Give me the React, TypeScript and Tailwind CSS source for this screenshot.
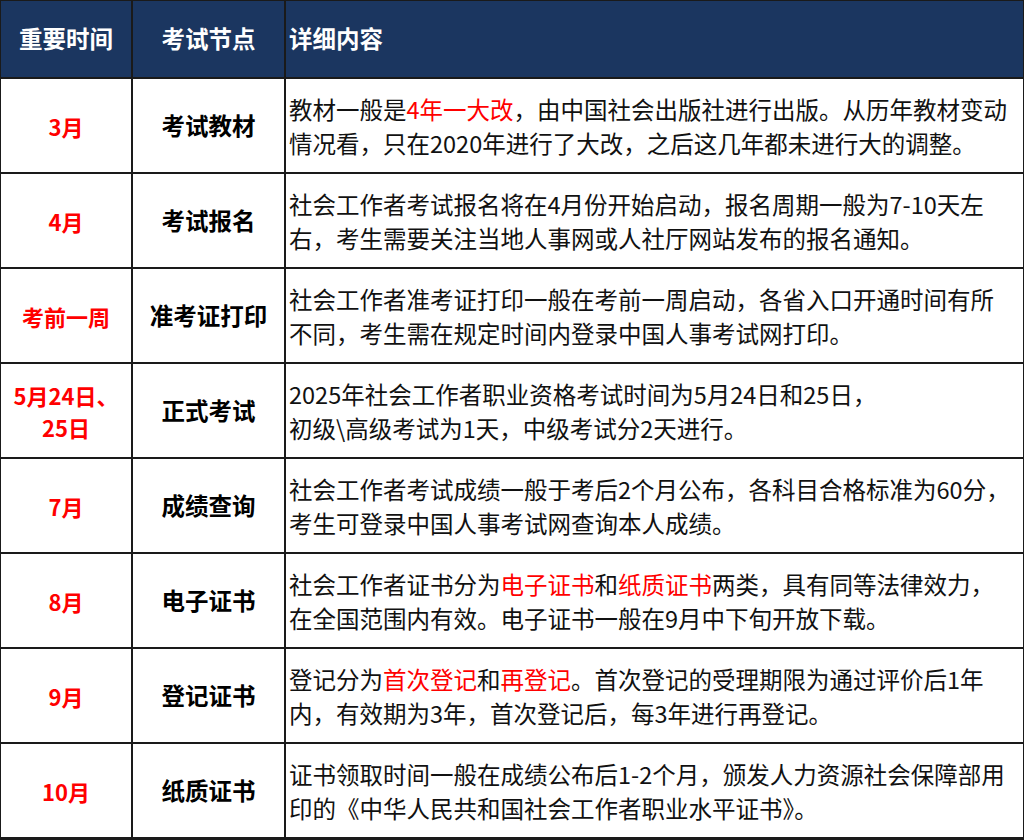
import React from "react";

const R = ({ children }: { children: React.ReactNode }) => <span className="text-[#ff0000]">{children}</span>;

const rows: [React.ReactNode, string, React.ReactNode, React.ReactNode][] = [
  ["3月", "考试教材", <>教材一般是<R>4年一大改</R>，由中国社会出版社进行出版。从历年教材变动</>, "情况看，只在2020年进行了大改，之后这几年都未进行大的调整。"],
  ["4月", "考试报名", "社会工作者考试报名将在4月份开始启动，报名周期一般为7-10天左", "右，考生需要关注当地人事网或人社厅网站发布的报名通知。"],
  ["考前一周", "准考证打印", "社会工作者准考证打印一般在考前一周启动，各省入口开通时间有所", "不同，考生需在规定时间内登录中国人事考试网打印。"],
  [<>5月24日、<br />25日</>, "正式考试", "2025年社会工作者职业资格考试时间为5月24日和25日，", "初级\\高级考试为1天，中级考试分2天进行。"],
  ["7月", "成绩查询", "社会工作者考试成绩一般于考后2个月公布，各科目合格标准为60分，", "考生可登录中国人事考试网查询本人成绩。"],
  ["8月", "电子证书", <>社会工作者证书分为<R>电子证书</R>和<R>纸质证书</R>两类，具有同等法律效力，</>, "在全国范围内有效。电子证书一般在9月中下旬开放下载。"],
  ["9月", "登记证书", <>登记分为<R>首次登记</R>和<R>再登记</R>。首次登记的受理期限为通过评价后1年</>, "内，有效期为3年，首次登记后，每3年进行再登记。"],
  ["10月", "纸质证书", "证书领取时间一般在成绩公布后1-2个月，颁发人力资源社会保障部用", "印的《中华人民共和国社会工作者职业水平证书》。"],
];

export default function App() {
  return (
    <div
      className="w-[1024px] h-[840px] bg-[#1a1a1a] overflow-hidden"
      style={{ fontFamily: '"Microsoft YaHei", "Noto Sans CJK SC", sans-serif' }}
    >
      <div className="grid grid-cols-[130px_151px_1fr] grid-rows-[76px_repeat(8,93px)] gap-[2px] p-[1px]">
        <div className="bg-[#1b3660] text-white font-bold text-[23.5px] flex items-center justify-center">重要时间</div>
        <div className="bg-[#1b3660] text-white font-bold text-[23.5px] flex items-center justify-center">考试节点</div>
        <div className="bg-[#1b3660] text-white font-bold text-[23.5px] flex items-center pl-[3px]">详细内容</div>
        {rows.map(([t, n, l1, l2], i) => (
          <React.Fragment key={i}>
            <div className="bg-white text-[#ff0000] font-bold text-[22px] leading-[32px] flex items-center justify-center text-center whitespace-nowrap">{t}</div>
            <div className="bg-white text-black font-bold text-[23.5px] flex items-center justify-center">{n}</div>
            <div className="bg-white text-[#111] text-[23.5px] leading-[34px] flex flex-col justify-center pl-[3px] whitespace-nowrap overflow-hidden">
              <div>{l1}</div>
              <div>{l2}</div>
            </div>
          </React.Fragment>
        ))}
      </div>
    </div>
  );
}
